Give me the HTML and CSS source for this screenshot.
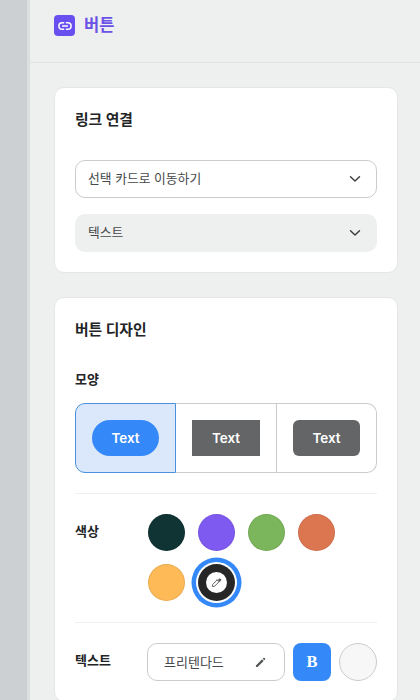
FILE: index.html
```html
<!DOCTYPE html>
<html lang="ko">
<head>
<meta charset="utf-8">
<title>버튼</title>
<link rel="stylesheet" href="styles.css">
</head>
<body>
<div class="app">
  <aside class="strip"></aside>
  <main class="panel">
    <header class="head">
      <span class="logo">
        <svg width="14" height="14" viewBox="0 0 14 14" fill="none" stroke="#fff" stroke-width="1.5" stroke-linecap="round"><path d="M5.600 3.700H4.200a3.300 3.300 0 0 0 0 6.600h1.400M8.400 3.700h1.400a3.300 3.300 0 0 1 0 6.600H8.400M4.600 7h4.800"/></svg>
      </span>
      <h1 class="head-title">버튼</h1>
    </header>
    <div class="content">
      <section class="card card-link">
        <h2 class="card-title">링크 연결</h2>
        <div class="select select-outline">
          <span class="select-text">선택 카드로 이동하기</span>
          <svg class="chev" width="12" height="8" viewBox="0 0 12 8" fill="none" stroke="#3a3c3d" stroke-width="1.400" stroke-linecap="round" stroke-linejoin="round"><path d="M1.500 1.800 6 6l4.500-4.200"/></svg>
        </div>
        <div class="select select-fill">
          <span class="select-text">텍스트</span>
          <svg class="chev" width="12" height="8" viewBox="0 0 12 8" fill="none" stroke="#3a3c3d" stroke-width="1.400" stroke-linecap="round" stroke-linejoin="round"><path d="M1.500 1.800 6 6l4.500-4.200"/></svg>
        </div>
      </section>
      <section class="card card-design">
        <h2 class="card-title">버튼 디자인</h2>
        <div class="label label-shape">모양</div>
        <div class="shapes">
          <div class="shape shape-on"><span class="pill">Text</span></div>
          <div class="shape shape-mid"><span class="rect">Text</span></div>
          <div class="shape shape-end"><span class="round">Text</span></div>
        </div>
        <div class="row row-color">
          <div class="label">색상</div>
          <div class="swatches">
            <span class="swatch c1"></span>
            <span class="swatch c2"></span>
            <span class="swatch c3"></span>
            <span class="swatch c4"></span>
            <span class="swatch c5"></span>
            <span class="picker">
              <span class="picker-in">
                <svg width="11" height="11" viewBox="0 0 13 13" fill="none" stroke="#55585a" stroke-width="1.100" stroke-linejoin="round"><path d="M7.400 3.400 9.600 5.600 4.200 11 1.700 11.300 2 8.800Z"/><path d="M7 2.900 10.100 6M8.600 3.600l1-1a1.200 1.200 0 0 1 1.700 1.700l-1 1" fill="#55585a"/></svg>
              </span>
            </span>
          </div>
        </div>
        <div class="row row-text">
          <div class="label">텍스트</div>
          <div class="text-tools">
            <div class="font">
              <span class="select-text">프리텐다드</span>
              <svg width="11" height="11" viewBox="0 0 12 12" fill="#55585a"><path d="M1 9.200 7.700 2.500 9.500 4.300 2.800 11H1ZM8.400 1.800l.8-.8a.8.8 0 0 1 1.100 0l.7.7a.8.8 0 0 1 0 1.100l-.8.8Z"/></svg>
            </div>
            <span class="bold">B</span>
            <span class="blank"></span>
          </div>
        </div>
      </section>
    </div>
  </main>
</div>
</body>
</html>
```
FILE: styles.css
```css
* { box-sizing: border-box; }
html, body { margin: 0; height: 100%; overflow: hidden; }
body { font-family: Inter, "Noto Sans CJK KR", "Liberation Sans", sans-serif; color: #222425; background: #eeefef; }
.app { display: flex; height: 700px; width: 420px; }
.strip { width: 27px; flex: none; background: #ccd0d3; }
.panel { flex: 1; min-width: 0; background: #eeefef; border-left: 3px solid #dcdfe0; }
.head { height: 63px; border-bottom: 1px solid #e0e2e3; padding: 0 0 26px 24px; display: flex; align-items: flex-end; gap: 9px; }
.logo { width: 21px; height: 21px; border-radius: 4px; background: #6a4ff0; display: flex; align-items: center; justify-content: center; }
.head-title { margin: 0; font-size: 16.500px; line-height: 21px; font-weight: 700; color: #6b52e6; }
.content { padding: 24px 22px 0 24px; display: flex; flex-direction: column; gap: 24px; }
.card { background: #fff; border: 1px solid #e4e6e7; border-radius: 10px; padding: 20px; }
.card-link { height: 186px; }
.card-title { margin: 1px 0 0; font-size: 14.800px; line-height: 22px; font-weight: 700; color: #222425; }
.select { height: 38px; border-radius: 10px; padding: 0 15px 0 12px; display: flex; align-items: center; justify-content: space-between; font-size: 12.800px; color: #46484a; }
.select-text { margin-top: -3px; }
.select-outline { margin-top: 29px; border: 1px solid #c9cccd; }
.select-fill { margin-top: 16px; padding-left: 13px; padding-right: 16px; background: #eeefef; }
.label { font-size: 13px; line-height: 20px; font-weight: 700; color: #222425; }
.label-shape { margin-top: 28px; }
.shapes { margin-top: 14px; height: 70px; display: grid; grid-template-columns: 101px 101px 100px; }
.shape { display: flex; align-items: center; justify-content: center; border: 1px solid #c9cccd; border-left: 0; }
.shape-on { background: #dbe8fb; border: 1px solid #4a90dc; border-radius: 10px 0 0 10px; }
.shape-end { border-radius: 0 10px 10px 0; }
.pill, .rect, .round { width: 67px; height: 36px; display: flex; align-items: center; justify-content: center; font-size: 13.500px; font-weight: 600; color: #fff; background: #636566; }
.rect { width: 68px; }
.pill { background: #3488f7; border-radius: 18px; }
.round { border-radius: 6px; }
.row { display: flex; }
.row-color { margin-top: 20px; border-top: 1px solid #eeefef; padding-top: 20px; padding-bottom: 1px; }
.row-color .label { width: 73px; padding-top: 7px; }
.swatches { display: grid; grid-template-columns: repeat(4, 37px); grid-auto-rows: 37px; gap: 13px; }
.swatch { border-radius: 50%; border: 1px solid rgba(0,0,0,.08); }
.c1 { background: #0f3433; }
.c2 { background: #7f5af0; }
.c3 { background: #7cb65c; }
.c4 { background: #dc7651; }
.c5 { background: #fdba57; }
.picker { width: 37px; height: 37px; border-radius: 50%; background: #272727; display: flex; align-items: center; justify-content: center; box-shadow: 0 0 0 2px #fff, 0 0 0 6.500px #3488f7; }
.picker-in { width: 21px; height: 21px; border-radius: 50%; background: #fff; display: flex; align-items: center; justify-content: center; }
.row-text { margin-top: 20px; border-top: 1px solid #eeefef; padding-top: 20px; align-items: center; }
.row-text .label { width: 72px; margin-top: -4px; }
.text-tools { display: flex; gap: 8px; }
.font { width: 138px; height: 38px; border: 1px solid #c9cccd; border-radius: 10px; padding: 0 18px 0 16px; display: flex; align-items: center; justify-content: space-between; font-size: 13px; color: #46484a; }
.font .select-text { margin-top: -2px; }
.bold { width: 38px; height: 38px; border-radius: 8px; background: #3488f7; color: #fff; display: flex; align-items: center; justify-content: center; font-family: "Liberation Serif", serif; font-weight: 700; font-size: 16.500px; }
.blank { width: 38px; height: 38px; border-radius: 50%; background: #f7f7f7; border: 1px solid #c9cccd; }
```
